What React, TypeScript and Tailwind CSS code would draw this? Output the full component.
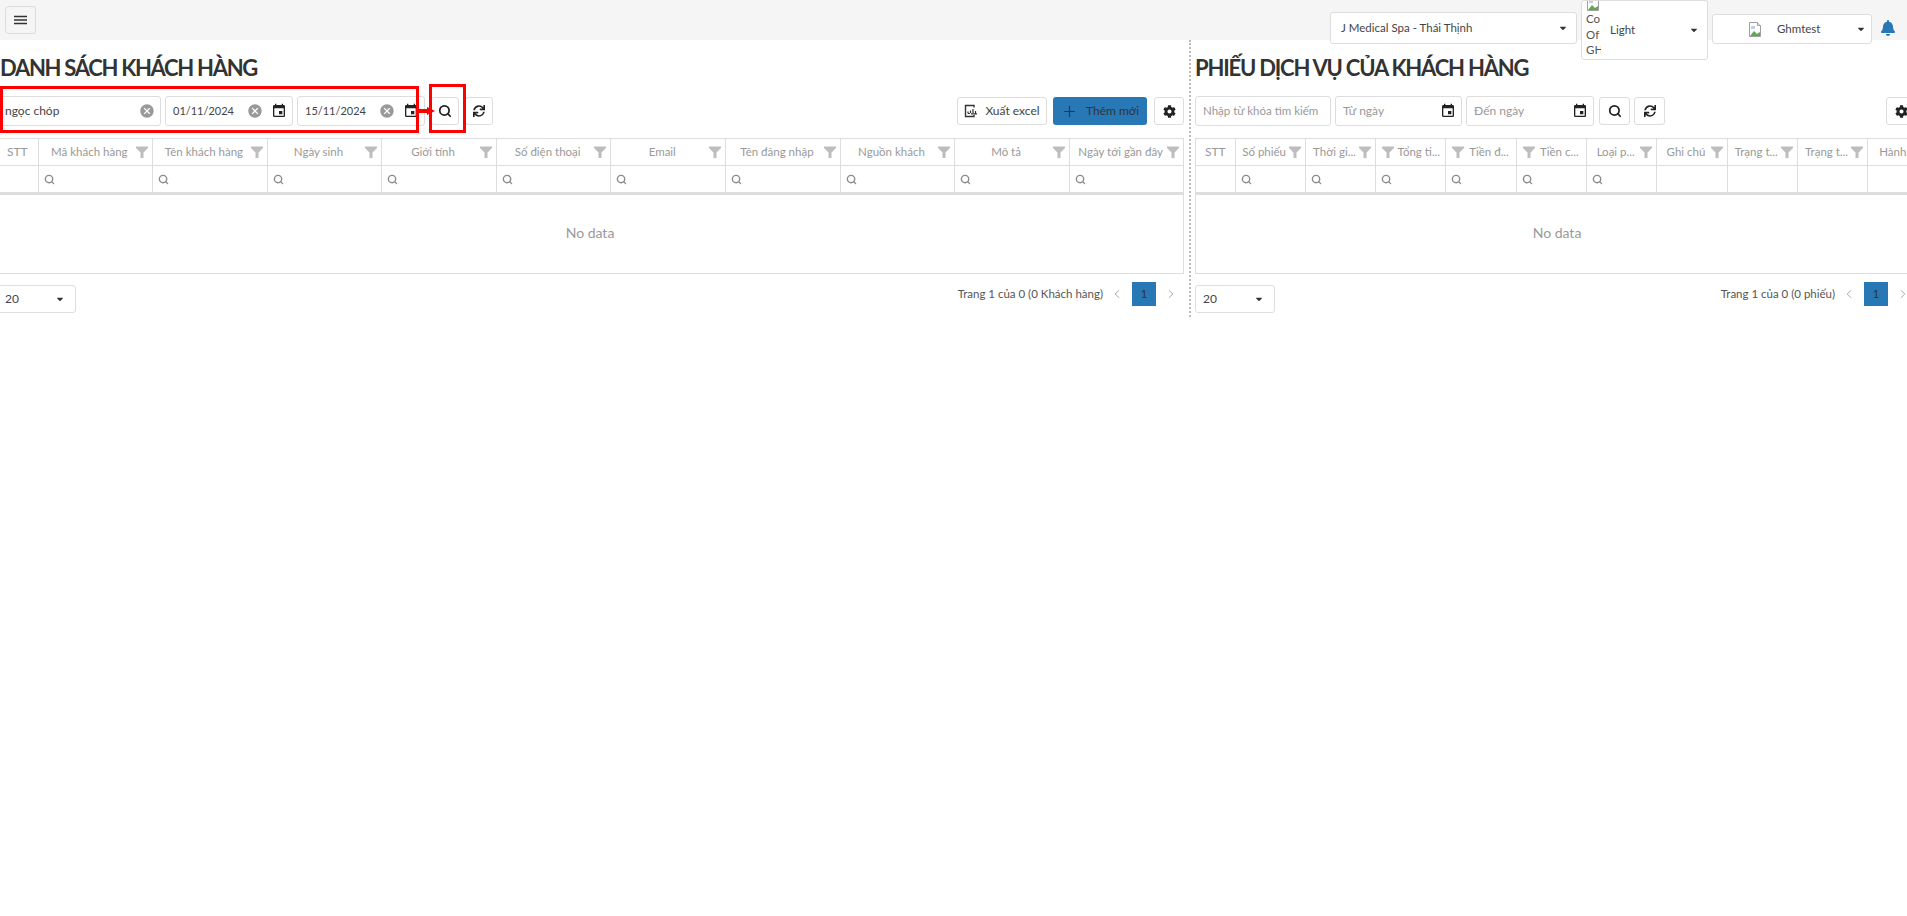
import { FaBell, FaCaretDown, FaCog, FaSync } from 'react-icons/fa';
import { MdCancel, MdEvent } from 'react-icons/md';
import { ChevronLeft, ChevronRight, Plus, Search } from 'lucide-react';

const leftColumns = [
  'Mã khách hàng',
  'Tên khách hàng',
  'Ngày sinh',
  'Giới tính',
  'Số điện thoại',
  'Email',
  'Tên đăng nhập',
  'Nguồn khách',
  'Mô tả',
  'Ngày tới gần đây',
];

const rightColumns = [
  { label: 'Số phiếu', search: true },
  { label: 'Thời gi...', search: true },
  { label: 'Tổng ti...', search: true, filterLeft: true },
  { label: 'Tiền đ...', search: true, filterLeft: true },
  { label: 'Tiền c...', search: true, filterLeft: true },
  { label: 'Loại p...', search: true },
  { label: 'Ghi chú' },
  { label: 'Trạng t...' },
  { label: 'Trạng t...' },
  { label: 'Hành...' },
];

function BrokenImage() {
  return (
    <svg width="14" height="15" viewBox="0 0 14 15" className="shrink-0">
      <path d="M1.500 0.500h8l3 3v11h-11z" fill="#fff" stroke="#a0a0a0" />
      <path d="M9.500 0.500v3h3" fill="#e8e8e8" stroke="#a0a0a0" />
      <path d="M3 4h4v3H3z" fill="#bcd0ee" />
      <path d="M2 14l4-5 3 3 3-2v4z" fill="#5cab4a" />
    </svg>
  );
}

function FilterIcon() {
  return (
    <svg width="12" height="12" viewBox="0 0 12 12" className="shrink-0">
      <path d="M0 0.500h12v1.500L7.500 6.500V12h-3V6.500L0 2z" fill="#bdbdbd" />
    </svg>
  );
}

function HamburgerIcon() {
  return (
    <svg width="13" height="10" viewBox="0 0 13 10" stroke="#333" strokeWidth="1.400">
      <path d="M0 1.500h13M0 5h13M0 8.500h13" />
    </svg>
  );
}

function ExportIcon() {
  return (
    <svg width="14" height="14" viewBox="0 0 14 14" fill="none" stroke="#333" strokeWidth="1.400">
      <path d="M10 3.500V1.500H1.500v11H10v-1.500" />
      <path d="M4 9.500h2M4 7.500v2M6.500 9V6.500M9 9V5M11.500 9.500V7M7 9.800h6" strokeWidth="1.200" />
    </svg>
  );
}

function IconButton({ children, className = '' }: { children: React.ReactNode; className?: string }) {
  return (
    <button className={`flex shrink-0 items-center justify-center rounded-[3px] border border-[#ddd] bg-white text-[#222] ${className}`}>
      {children}
    </button>
  );
}

function Field({
  value,
  placeholder,
  width,
  clear,
  calendar,
  textSize = 'text-[12px]',
}: {
  value?: string;
  placeholder?: string;
  width: string;
  clear?: boolean;
  calendar?: boolean;
  textSize?: string;
}) {
  return (
    <div className={`flex h-[30px] shrink-0 items-center rounded-[3px] border border-[#ddd] bg-white pl-[7px] pr-[2px] ${textSize} ${width}`}>
      <span className={`flex-1 truncate ${value ? 'text-[#444]' : 'text-[#999]'}`}>{value ?? placeholder}</span>
      {clear && <MdCancel className={`text-[16px] text-[#999] ${calendar ? 'mr-[8px]' : 'mr-[3px]'}`} />}
      {calendar && <MdEvent className="mr-[3px] text-[16px] text-[#222]" />}
    </div>
  );
}

function PageSelect({ className }: { className: string }) {
  return (
    <div className={`flex h-[28px] items-center justify-between rounded-[3px] border border-[#ddd] bg-white pr-[10px] text-[12px] text-[#444] ${className}`}>
      <span>20</span>
      <FaCaretDown className="text-[10px] text-[#333]" />
    </div>
  );
}

function Pager({ label, className }: { label: string; className: string }) {
  return (
    <div className={`flex items-center text-[11.5px] text-[#555] ${className}`}>
      <span>{label}</span>
      <ChevronLeft size={14} strokeWidth={1.5} className="ml-[7px] text-[#999]" />
      <span className="ml-[8px] flex size-[24px] items-center justify-center bg-[#2878b6] text-[12px] text-[#333]">1</span>
      <ChevronRight size={14} strokeWidth={1.5} className="ml-[8px] shrink-0 text-[#999]" />
    </div>
  );
}

function TopSelect({ children, className }: { children: React.ReactNode; className: string }) {
  return <div className={`flex shrink-0 items-center rounded-[3px] border border-[#ddd] bg-white text-[11.5px] text-[#444] ${className}`}>{children}</div>;
}

function HeaderCell({ label, filterLeft }: { label: string; filterLeft?: boolean }) {
  return (
    <div className="flex h-[27px] items-center justify-between gap-[2px] border-r border-b border-[#ddd] pb-[1px] pl-[6px] pr-[4px] text-[11.5px] whitespace-nowrap text-[#999]">
      {filterLeft && <FilterIcon />}
      <span className="flex-1 text-center">{label}</span>
      {!filterLeft && <FilterIcon />}
    </div>
  );
}

function SearchCell({ search }: { search?: boolean }) {
  return (
    <div className="flex h-[26px] items-center border-r border-[#ddd] pl-[5px]">
      {search && <Search size={11} strokeWidth={3} className="text-[#8a8a8a]" />}
    </div>
  );
}

export default function App() {
  return (
    <div className="relative h-[916px] w-full overflow-hidden bg-white font-['Lato','Noto_Sans',sans-serif]">
      <header className="relative flex h-[40px] items-start justify-between bg-[#f5f5f5]">
        <button className="ml-[5px] mt-[6px] flex h-[28px] w-[31px] items-center justify-center rounded-[3px] border border-[#ddd]">
          <HamburgerIcon />
        </button>
        <div className="mr-[11px] flex items-start">
          <TopSelect className="mt-[12px] h-[32px] w-[247px] justify-between pl-[10px] pr-[8px]">
            <span>J Medical Spa - Thái Thịnh</span>
            <FaCaretDown className="text-[10px] text-[#333]" />
          </TopSelect>
          <TopSelect className="relative z-10 ml-[4px] h-[60px] w-[127px] overflow-hidden pl-[4px] pr-[8px]">
            <div className="w-[15px] shrink-0 self-start overflow-hidden whitespace-nowrap leading-[15.500px] text-[#555]">
              <div className="-mt-[5px] h-[15px]">
                <BrokenImage />
              </div>
              <div>Co</div>
              <div>Of</div>
              <div>GH</div>
            </div>
            <span className="ml-[9px] flex-1">Light</span>
            <FaCaretDown className="text-[10px] text-[#333]" />
          </TopSelect>
          <TopSelect className="relative z-10 ml-[4px] mt-[14px] h-[30px] w-[160px] pl-[35px] pr-[5px]">
            <BrokenImage />
            <span className="ml-[15px] flex-1">Ghmtest</span>
            <FaCaretDown className="text-[10px] text-[#333]" />
          </TopSelect>
          <FaBell className="ml-[8px] mt-[20px] text-[16px] text-[#2878b6]" />
        </div>
      </header>

      <main className="flex">
        <section className="-ml-[3px] h-[277px] w-[1194px] shrink-0 border-r-2 border-dotted border-[#bbb] pr-[5px]">
          <h1 className="h-[56px] pl-[3px] pt-[14px] text-[22px] leading-[28px] font-bold tracking-[-1.3px] text-[#333]">DANH SÁCH KHÁCH HÀNG</h1>
          <div className="flex items-center">
            <Field value="ngọc chóp" width="w-[164px]" clear />
            <Field value="01/11/2024" textSize="text-[11px]" width="w-[128px] ml-[4px]" clear calendar />
            <Field value="15/11/2024" textSize="text-[11px]" width="w-[128px] ml-[4px]" clear calendar />
            <IconButton className="ml-[6px] h-[28px] w-[28px]">
              <Search size={14} strokeWidth={3} />
            </IconButton>
            <IconButton className="ml-[6px] h-[28px] w-[28px]">
              <FaSync className="text-[12px]" />
            </IconButton>
            <button className="ml-auto flex h-[28px] w-[90px] items-center justify-center gap-[7px] rounded-[3px] border border-[#ddd] bg-white text-[12px] text-[#444]">
              <ExportIcon />
              Xuất excel
            </button>
            <button className="ml-[6px] flex h-[28px] w-[94px] items-center justify-center gap-[8px] rounded-[3px] bg-[#2878b6] text-[12px] text-[#333]">
              <Plus size={17} strokeWidth={1.6} />
              Thêm mới
            </button>
            <IconButton className="ml-[7px] h-[28px] w-[30px]">
              <FaCog className="text-[13px]" />
            </IconButton>
          </div>
          <div className="mt-[12px] border-t border-[#ddd]">
            <div className="grid grid-cols-[41.500px_repeat(10,114.600px)] border-b-[3px] border-[#ddd]">
              <div className="flex h-[27px] items-center justify-center border-r border-b border-[#ddd] pb-[1px] text-[12px] text-[#999]">STT</div>
              {leftColumns.map((label) => (
                <HeaderCell key={label} label={label} />
              ))}
              <SearchCell />
              {leftColumns.map((label) => (
                <SearchCell key={label} search />
              ))}
            </div>
            <div className="flex h-[79px] items-center justify-center border-r border-b border-[#ddd] pb-[3px] text-[14px] text-[#999]">No data</div>
          </div>
          <div className="mt-[11px] flex items-start justify-between">
            <PageSelect className="w-[79px] pl-[7px]" />
            <Pager label="Trang 1 của 0 (0 Khách hàng)" className="-mt-[3px] mr-[6px]" />
          </div>
        </section>

        <section className="ml-[4px] h-[277px] min-w-0 flex-1 overflow-hidden">
          <h1 className="h-[56px] pt-[14px] text-[22px] leading-[28px] font-bold tracking-[-1.2px] whitespace-nowrap text-[#333]">PHIẾU DỊCH VỤ CỦA KHÁCH HÀNG</h1>
          <div className="flex w-[722px] items-center">
            <Field placeholder="Nhập từ khóa tìm kiếm" textSize="text-[11.5px]" width="w-[136px]" />
            <Field placeholder="Từ ngày" width="w-[127px] ml-[4px]" calendar />
            <Field placeholder="Đến ngày" width="w-[128px] ml-[4px]" calendar />
            <IconButton className="ml-[5px] h-[28px] w-[31px]">
              <Search size={14} strokeWidth={3} />
            </IconButton>
            <IconButton className="ml-[4px] h-[28px] w-[31px]">
              <FaSync className="text-[12px]" />
            </IconButton>
            <IconButton className="ml-auto h-[28px] w-[31px]">
              <FaCog className="text-[13px]" />
            </IconButton>
          </div>
          <div className="mt-[12px] w-[760px] border-t border-l border-[#ddd]">
            <div className="grid grid-cols-[39.500px_repeat(10,70.300px)] overflow-hidden border-b-[3px] border-[#ddd]">
              <div className="flex h-[27px] items-center justify-center border-r border-b border-[#ddd] pb-[1px] text-[12px] text-[#999]">STT</div>
              {rightColumns.map((col, i) => (
                <HeaderCell key={i} label={col.label} filterLeft={col.filterLeft} />
              ))}
              <SearchCell />
              {rightColumns.map((col, i) => (
                <SearchCell key={i} search={col.search} />
              ))}
            </div>
            <div className="flex h-[79px] w-[722px] items-center justify-center border-b border-[#ddd] pb-[3px] text-[14px] text-[#999]">No data</div>
          </div>
          <div className="mt-[11px] flex w-[715px] items-start justify-between">
            <PageSelect className="w-[80px] pl-[7px]" />
            <Pager label="Trang 1 của 0 (0 phiếu)" className="-mt-[3px]" />
          </div>
        </section>
      </main>

      {/* red marks drawn on top of the screenshot */}
      <div className="absolute left-0 top-[86px] h-[47px] w-[419px] border-[3px] border-[#f00]" />
      <div className="absolute left-[429px] top-[84px] h-[49px] w-[37px] border-[3px] border-[#f00]" />
      <div className="absolute left-[419px] top-[109px] h-[4px] w-[8px] bg-[#f00]" />
      <div className="absolute left-[427px] top-[107px] size-0 border-y-[4px] border-l-[8px] border-y-transparent border-l-[#f00]" />
    </div>
  );
}
